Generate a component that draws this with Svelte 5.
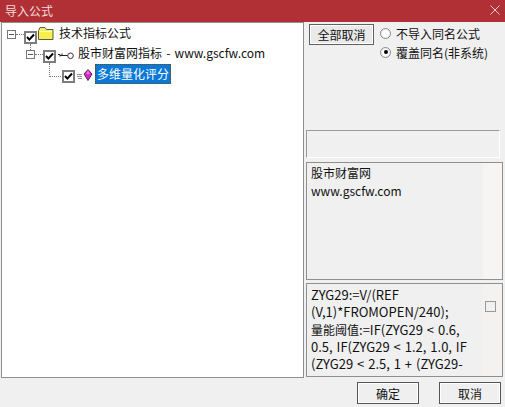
<script>
  const btnRows = ['确定', '取消'];
</script>

<div class="win">
  <header class="title"><span>导入公式</span>
    <svg class="close" width="10" height="10" viewBox="0 0 10 10"><path d="M.5.5l9 9M9.5.5l-9 9" stroke="#eecfd0" fill="none"/></svg>
  </header>
  <div class="main">
    <div class="tree">
      <div class="row r1">
        <span class="exp"></span><span class="dots-h"></span>
        <span class="cb"><svg width="9" height="9" viewBox="0 0 9 9"><path d="M1 4l2.4 2.6L8 1.5" stroke="#000" stroke-width="2" fill="none"/></svg></span>
        <svg class="ico folder" width="16" height="13" viewBox="0 0 16 13"><path d="M.5 3.5l1.5-3h5l1.5 2h6.5v10H.5z" fill="#f8ee4e" stroke="#5c5a40"/><path d="M1.5 4.5h12.5" stroke="#fffbd0"/></svg>
        <span class="lbl">技术指标公式</span>
      </div>
      <div class="row r2">
        <span class="exp"></span><span class="dots-h"></span>
        <span class="cb"><svg width="9" height="9" viewBox="0 0 9 9"><path d="M1 4l2.4 2.6L8 1.5" stroke="#000" stroke-width="2" fill="none"/></svg></span>
        <svg class="ico key" width="16" height="8" viewBox="0 0 16 8"><path d="M0 2.5h2v2M2 3.5h8M4 1.5v2" stroke="#222" fill="none"/><circle cx="12.5" cy="3.8" r="2.8" fill="#fff" stroke="#333"/></svg>
        <span class="lbl wide">股市财富网指标 - www.gscfw.com</span>
      </div>
      <div class="row r3">
        <span class="cb"><svg width="9" height="9" viewBox="0 0 9 9"><path d="M1 4l2.4 2.6L8 1.5" stroke="#000" stroke-width="2" fill="none"/></svg></span>
        <svg class="ico gem" width="16" height="12" viewBox="0 0 16 12"><path d="M0 5.5h5M0 7.5h5M1 9.5h4" stroke="#8f8f8f"/><path d="M11 .5l4 4.5-4 6.5-4-6.5z" fill="#e81fd0" stroke="#2a2a2a" stroke-width=".9"/><path d="M11 1l-2 4h4z" fill="#f06ce0"/></svg>
        <span class="lbl sel">多维量化评分</span>
      </div>
      <span class="v v1"></span><span class="v v2"></span>
    </div>
    <aside class="side">
      <div class="opts">
        <button class="all">全部取消</button>
        <div class="radios">
          <label class="radio"><span class="dot"></span>不导入同名公式</label>
          <label class="radio"><span class="dot on"></span>覆盖同名(非系统)</label>
        </div>
      </div>
      <div class="blank"></div>
      <div class="info"><p>股市财富网</p><p>www.gscfw.com</p></div>
      <div class="formula">
        <p>ZYG29:=V/(REF<br>(V,1)*FROMOPEN/240);<br><span class="cjk">量能阈值</span>:=IF(ZYG29 &lt; 0.6,<br>0.5, IF(ZYG29 &lt; 1.2, 1.0, IF<br>(ZYG29 &lt; 2.5, 1 + (ZYG29-</p>
        <span class="square"></span>
      </div>
    </aside>
  </div>
  <footer class="foot">
    {#each btnRows as b}<button class="ok">{b}</button>{/each}
  </footer>
</div>

<style>
  :global(body) { margin: 0; background: #f0f0f0; }
  .win { width: 505px; height: 407px; display: flex; flex-direction: column; background: #f0f0f0; font: 12px "Noto Sans CJK SC", "Liberation Sans", sans-serif; color: #111; overflow: hidden; box-sizing: border-box; position: relative; }
  .title { height: 22px; flex: none; background: #b03035; color: #f3dcdc; display: flex; align-items: center; justify-content: space-between; padding: 0 5px 2px 5px; box-sizing: border-box; font-size: 12px; }
  .close { margin-top: 0; }
  .main { display: flex; height: 356px; flex: none; padding-left: 1px; }
  .tree { position: relative; width: 303px; height: 356px; box-sizing: border-box; background: #fff; border: 1px solid #8f8f8f; }
  .row { display: flex; align-items: flex-start; height: 20px; }
  .r1 { padding-left: 5px; }
  .r2 { padding-left: 24px; }
  .r3 { padding-left: 60px; }
  .exp { width: 7px; height: 7px; margin-top: 7px; border: 1px solid #777; background: linear-gradient(#555,#555) center/5px 1px no-repeat; flex: none; }
  .dots-h { width: 8px; height: 0; margin-top: 11px; border-top: 1px dotted #777; flex: none; }
  .cb { width: 9px; height: 9px; margin-top: 7px; border: 2px solid #7d7d7d; display: inline-flex; flex: none; background: #fff; }
  .r1 .cb { margin-top: 8px; }
  .ico { margin-left: 2px; flex: none; }
  .folder { margin-left: 1px; margin-top: 4px; }
  .key { margin-top: 9px; }
  .gem { margin-top: 6px; }
  .lbl { margin-left: 4px; line-height: 20px; white-space: nowrap; }
  .wide { word-spacing: 1.5px; }
  .r1 .lbl { margin-left: 5px; }
  .r3 .lbl.sel { margin-left: 2px; margin-top: 1px; }
  .sel { box-sizing: border-box; height: 20px; width: 76px; background: #0a78d7; color: #fff; border: 1px dotted #6a4a10; padding: 0 1px; line-height: 18px; }
  .v { position: absolute; border-left: 1px dotted #777; width: 0; }
  .v1 { left: 28px; top: 21px; height: 6px; }
  .v2 { left: 47px; top: 40px; height: 13px; border-bottom: 1px dotted #777; width: 13px; }
  .side { width: 198px; margin-left: 2px; display: flex; flex-direction: column; }
  .opts { display: flex; gap: 6px; height: 108px; padding: 2px 0 0 3px; box-sizing: border-box; }
  .all { width: 65px; height: 21px; padding: 0; border: 1px solid #606060; background: #e9e9e9; font: inherit; color: #111; box-shadow: inset 0 0 0 1px #fff; flex: none; }
  .radios { display: flex; flex-direction: column; gap: 1px; }
  .radio { display: flex; align-items: center; gap: 5px; height: 18px; white-space: nowrap; }
  .dot { width: 9px; height: 9px; border-radius: 50%; border: 1px solid #888; background: #fff; box-shadow: inset 0 0 0 1px #eee; position: relative; flex: none; }
  .dot.on::after { content: ""; position: absolute; left: 2.5px; top: 2.5px; width: 4px; height: 4px; background: #000; border-radius: 50%; }
  .blank { height: 28px; width: 194px; box-sizing: border-box; border: 1px solid #9a9a9a; border-bottom-color: #fff; border-right-color: #fff; }
  .info { margin-top: 4px; height: 118px; width: 197px; box-sizing: border-box; border: 1px solid #8f8f8f; padding: 1px 0 0 4px; background: linear-gradient(to right, #f0f0f0 176px, #f6f5f3 176px); line-height: 18px; }
  .info p, .formula p { margin: 0; }
  .formula { margin-top: 3px; height: 94px; width: 197px; box-sizing: border-box; border: 1px solid #8f8f8f; padding: 2px 0 0 4px; position: relative; line-height: 17.25px; white-space: nowrap; font-size: 13px; word-spacing: 1px; background: linear-gradient(to right, #f0f0f0 176px, #f3f2f0 176px); }
  .cjk { font-size: 12px; }
  .square { position: absolute; left: 178px; top: 17px; width: 9px; height: 9px; border: 1px solid #999; background: #f0f0f0; }
  .foot { flex: 1; display: flex; justify-content: flex-end; align-items: flex-start; gap: 20px; padding: 4px 4px 0 0; }
  .ok { width: 62px; height: 22px; padding: 0; border: 1px solid #555; background: #efefef; font: inherit; color: #111; box-shadow: inset 0 0 0 1px #fff; }
</style>
